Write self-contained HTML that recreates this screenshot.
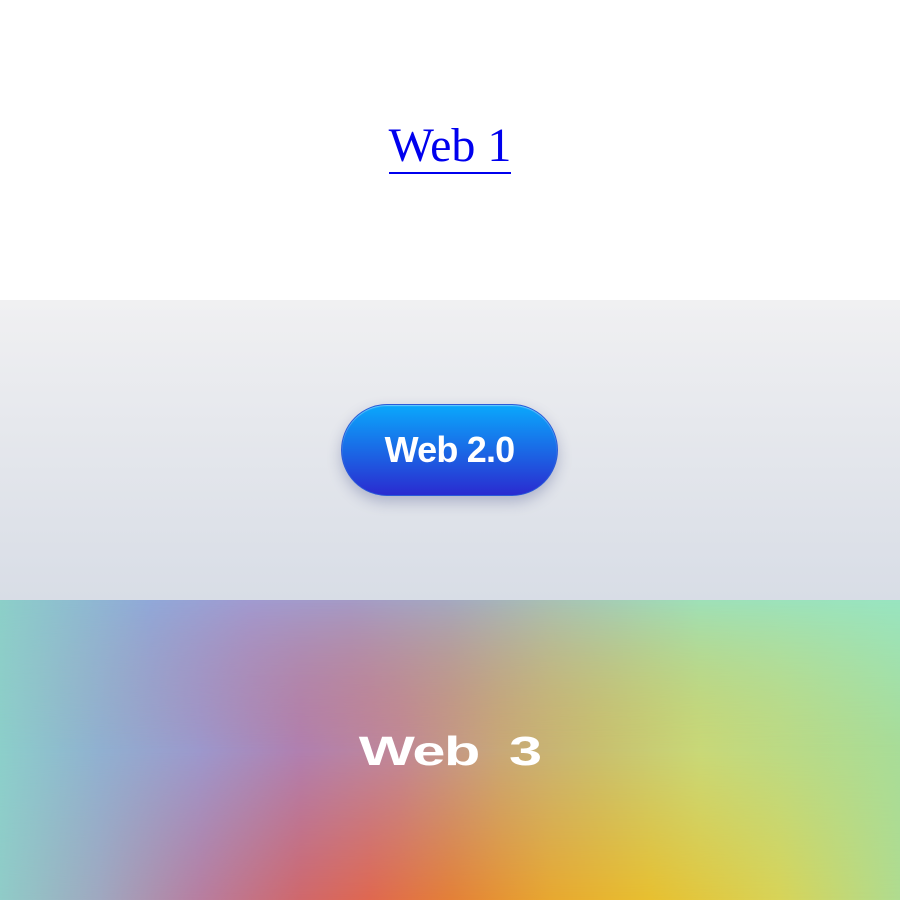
<!DOCTYPE html>
<html><head><meta charset="utf-8"><style>
html,body{margin:0;padding:0;width:900px;height:900px;overflow:hidden}
.s1{position:absolute;left:0;top:0;width:900px;height:300px;background:#fff}
.s1 a{position:absolute;left:0;width:900px;top:118px;text-align:center;font-family:"Liberation Serif",serif;font-size:48px;color:#0000ee;text-decoration:none}
.s1 a span{border-bottom:2px solid #0000ee;line-height:1}
.s2{position:absolute;left:0;top:300px;width:900px;height:300px;background:linear-gradient(#f0f0f2,#d8dde6)}
.btn{position:absolute;left:341px;top:104px;width:217px;height:92px;border-radius:46px;background:linear-gradient(#0aa8fc,#2a2bd0);box-shadow:0 6px 14px rgba(40,50,120,.28),inset 0 1px 1px rgba(255,255,255,.4);color:#fff;font-family:"Liberation Sans",sans-serif;font-weight:bold;font-size:36px;line-height:90px;text-align:center;letter-spacing:-0.8px;box-sizing:border-box;border:1px solid #2b5bd8}
.s3{position:absolute;left:0;top:600px;width:900px;height:300px;overflow:hidden}
.l{position:absolute;left:0;top:0;width:900px;height:300px}
.la{background:linear-gradient(90deg,#90ccc8 0px,#a0a8c0 100px,#b87ea0 200px,#d0686c 300px,#e06850 370px,#e48038 450px,#e8a830 550px,#e8c030 650px,#d8d458 780px,#b0dc90 900px)}
.lb{background:linear-gradient(90deg,#8ccfca 0px,#90b0d0 100px,#9c98cc 200px,#b080b0 300px,#c08898 400px,#c8a878 500px,#c8c070 600px,#c8d878 700px,#a8dc98 900px);
-webkit-mask-image:linear-gradient(to bottom,transparent 0px,#000 150px,transparent 300px);mask-image:linear-gradient(to bottom,transparent 0px,#000 150px,transparent 300px)}
.lc{background:linear-gradient(90deg,#8ccfc8 0px,#90a8d8 150px,#a09ad0 250px,#a49ac6 350px,#a4a8c0 450px,#a8c0b4 550px,#9ee0b8 700px,#98e4c0 900px);
-webkit-mask-image:linear-gradient(to bottom,#000 0px,transparent 150px);mask-image:linear-gradient(to bottom,#000 0px,transparent 150px)}
.w3{position:absolute;left:0;width:900px;top:126px;text-align:center;color:#fff;font-family:"Liberation Sans",sans-serif;font-weight:bold;font-size:41px;line-height:50px}
.w3 span{display:inline-block;transform:scaleX(1.45);letter-spacing:-1px}
</style></head><body>
<div class="s1"><a href="#"><span>Web 1</span></a></div>
<div class="s2"><div class="btn">Web 2.0</div></div>
<div class="s3"><div class="l la"></div><div class="l lb"></div><div class="l lc"></div><div class="w3"><span>Web&nbsp;&nbsp;3</span></div></div>
</body></html>
